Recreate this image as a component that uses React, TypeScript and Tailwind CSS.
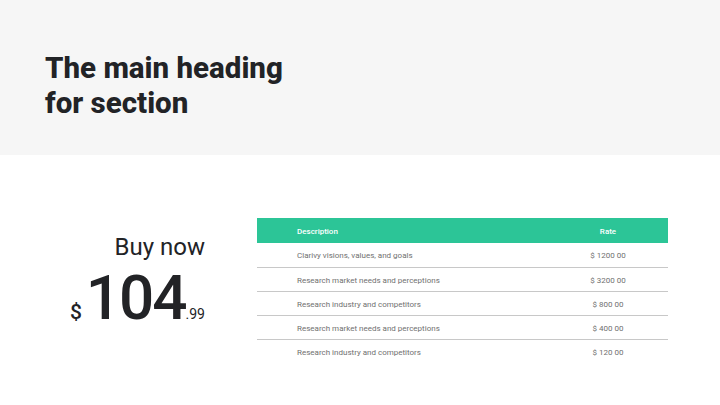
const rows = [
  { desc: "Clarivy visions, values, and goals", rate: "$ 1200 00" },
  { desc: "Research market needs and perceptions", rate: "$ 3200 00" },
  { desc: "Research industry and competitors", rate: "$ 800 00" },
  { desc: "Research market needs and perceptions", rate: "$ 400 00" },
  { desc: "Research industry and competitors", rate: "$ 120 00" },
];

export default function App() {
  return (
    <div className="h-[405px] w-[720px] overflow-hidden bg-white font-['Roboto',sans-serif] text-[#222326]">
      <header className="h-[155px] bg-[#f6f6f6] px-[45px] pt-[51px]">
        <h1 className="text-[29.5px] font-extrabold leading-[35px]">
          The main heading
          <br />
          for section
        </h1>
      </header>

      <section className="flex pt-[63px]">
        <div className="flex w-[205px] flex-col items-end pt-[15px]">
          <div className="text-[24px] leading-[28px]">Buy now</div>
          <div className="flex items-baseline leading-[73px]">
            <span className="mr-[4px] text-[21px] font-medium">$</span>
            <span className="text-[62px] font-medium tracking-[-2px]">104</span>
            <span className="text-[14px]">.99</span>
          </div>
        </div>

        <table className="ml-[52px] w-[411px] border-collapse text-[8px] text-[#707070]">
          <thead>
            <tr className="h-[25px] bg-[#2cc597] text-white">
              <th className="pl-[40px] pt-[3px] text-left font-medium">Description</th>
              <th className="w-[120px] pt-[3px] text-center font-medium">Rate</th>
            </tr>
          </thead>
          <tbody>
            {rows.map((r, i) => (
              <tr key={i} className={`h-[24px] ${i < rows.length - 1 ? "border-b border-[#c8c8c8]" : ""}`}>
                <td className="pl-[40px] pt-[3px]">{r.desc}</td>
                <td className="pt-[3px] text-center">{r.rate}</td>
              </tr>
            ))}
          </tbody>
        </table>
      </section>
    </div>
  );
}
